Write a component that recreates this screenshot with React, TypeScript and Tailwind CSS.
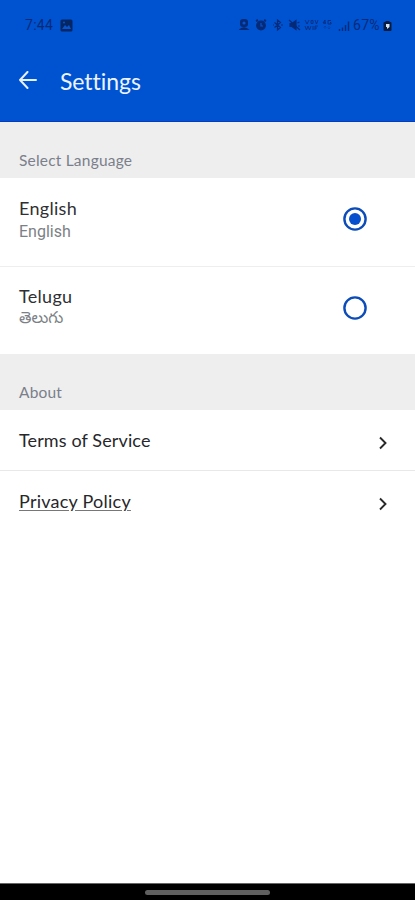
import { useState } from 'react';

type Language = { id: string; name: string; nativeName: string };

const languages: Language[] = [
  { id: 'en', name: 'English', nativeName: 'English' },
  { id: 'te', name: 'Telugu', nativeName: 'తెలుగు' },
];

function StatusBar() {
  return (
    <div className="flex h-[50px] items-center pl-[25px] pr-[23px] font-['Roboto',sans-serif] text-[14px] text-[#052a78]">
      <span className="w-[29px] whitespace-nowrap leading-4 tracking-[0.3px]">7:44</span>
      <svg className="ml-[6px]" width="13" height="13" viewBox="0 0 13 13">
        <rect x="0.5" y="0.5" width="12" height="12" rx="1.5" fill="#052563" />
        <path d="M2 10l3-4 2 2 2-2 2 4z" fill="#0754cd" />
        <circle cx="4" cy="3.5" r="1" fill="#0754cd" />
      </svg>
      <div className="ml-auto flex items-center">
        <svg width="98" height="14" viewBox="0 0 98 14" fill="none" stroke="#052a78" strokeWidth="1.2">
          {/* contact */}
          <rect x="1" y="1" width="8" height="8" rx="3" fill="#052a78" stroke="none" />
          <circle cx="5" cy="5" r="1.6" fill="#0754cd" stroke="none" />
          <path d="M1 11.500q4-3.500 8 0z" fill="#052a78" />
          {/* alarm */}
          <circle cx="22" cy="7.5" r="4.3" fill="#052a78" />
          <path d="M17 3l2-1M27 3l-2-1" strokeWidth="2" />
          <path d="M22 5v3h2" stroke="#0754cd" />
          {/* bluetooth */}
          <path d="M35.5 4.5l6 5-3 2.5V2l3 2.5-6 5M34 7h1M42 7h2" />
          {/* muted speaker */}
          <path d="M51 5.5h2l4-3v9l-4-3h-2z" fill="#052a78" />
          <path d="M50 2l11 10M58.5 5l2-1M59 8h2" />
          {/* vo wifi */}
          <path d="M66 2l2 4 2-4M72 2.5h2v3h-2zM76 2l1.5 4L79 2M66 8l1.5 4 1.5-4 1.5 4L72 8M74 8v4M76 12V8h3M76 10h2" strokeWidth="0.8" />
          {/* network type */}
          <path d="M86 6V2l-2 3h3M92 2.5h-3V6h3V4.5h-1" strokeWidth="0.9" />
          <path d="M86 8v3M84.5 9.5L86 8l1.5 1.5M90 8v3M88.5 9.5L90 11l1.5-1.5" strokeWidth="0.6" opacity="0.6" />
        </svg>
        <svg className="ml-px" width="13" height="13" viewBox="0 0 13 13" stroke="#052a78">
          <path d="M1.5 12v-2M4.5 12V8.500M7.500 12V6M10.500 12V2.500" strokeWidth="1.4" />
        </svg>
        <span className="ml-[2px] w-[30px] whitespace-nowrap leading-4 tracking-[0.3px]">67%</span>
        <svg className="mt-[2px]" width="9" height="12" viewBox="0 0 9 12">
          <path d="M2.500 2V1h4v1h1q1 0 1 1v7q0 1-1 1h-6q-1 0-1-1V3q0-1 1-1z" fill="#071c43" />
          <path d="M3 4h3.500v3L4 9V7H3z" fill="#d5e5ed" />
        </svg>
      </div>
    </div>
  );
}

function SectionTitle({ title }: { title: string }) {
  return (
    <div className="flex h-14 items-end bg-[#eeeeee] px-[19px] pb-[8px]">
      <h2 className="text-[15.500px] leading-5 tracking-[0.200px] text-[#7b7f8b]">{title}</h2>
    </div>
  );
}

function Radio({ checked }: { checked: boolean }) {
  return (
    <svg width="24" height="24" viewBox="0 0 24 24" fill="none">
      <circle cx="12" cy="12" r="10.6" stroke="#0c4cb9" strokeWidth="2.4" />
      {checked && <circle cx="12" cy="12" r="6" fill="#0750cd" />}
    </svg>
  );
}

function LinkRow({ label, underline }: { label: string; underline?: boolean }) {
  return (
    <button className="flex h-[60px] w-full items-center justify-between pl-[19px] pr-[27px] text-left">
      <span className={`text-[18px] leading-6 text-[#27272a] ${underline ? 'tracking-[0.240px] underline decoration-[#777] underline-offset-2' : 'tracking-[0.120px]'}`}>
        {label}
      </span>
      <svg className="mt-[5px]" width="10" height="14" viewBox="0 0 10 14" fill="none" stroke="#292929" strokeWidth="1.9">
        <path d="M2 1.500L7.500 7L2 12.500" />
      </svg>
    </button>
  );
}

export default function SettingsScreen() {
  const [selected, setSelected] = useState('en');

  return (
    <div className="flex h-[900px] w-[415px] flex-col overflow-hidden bg-white font-['Lato',sans-serif]">
      <header className="h-[122px] border-b border-[#073bbd] bg-[#0053d0]">
        <StatusBar />
        <div className="flex h-[62px] items-center pl-[18px]">
          <button aria-label="Back">
            <svg width="20" height="20" viewBox="0 0 20 20" fill="none" stroke="#e6f0ff" strokeWidth="2" strokeLinecap="round" strokeLinejoin="round">
              <path d="M18 9H2M9.500 1L2 9l7.500 8" />
            </svg>
          </button>
          <h1 className="ml-[22px] text-[23px] leading-7 tracking-[-0.050px] text-[#edf4ff]">Settings</h1>
        </div>
      </header>

      <SectionTitle title="Select Language" />
      {languages.map((lang, i) => (
        <button
          key={lang.id}
          onClick={() => setSelected(lang.id)}
          className={`flex w-full items-start justify-between pl-[19px] pr-12 text-left ${i === 0 ? 'h-[89px] border-b border-[#eeeeee] pt-[18px]' : 'h-[87px] pt-[17px]'}`}
        >
          <span className="flex flex-col">
            <span className="text-[18px] leading-6 tracking-[0.300px] text-[#303034]">{lang.name}</span>
            <span className={`font-['Roboto','Noto_Sans_Telugu','Noto_Sans',sans-serif] text-[16px] text-[#7b7f86] ${i === 0 ? 'leading-6' : 'leading-5'}`}>
              {lang.nativeName}
            </span>
          </span>
          <span className={i === 0 ? 'mt-[11px]' : 'mt-3'}>
            <Radio checked={selected === lang.id} />
          </span>
        </button>
      ))}

      <SectionTitle title="About" />
      <div className="border-b border-[#e8e8e8]">
        <LinkRow label="Terms of Service" />
      </div>
      <LinkRow label="Privacy Policy" underline />

      <footer className="mt-auto flex h-[17px] items-center justify-center border-t border-[#666] bg-black">
        <div className="h-[5px] w-[125px] rounded-full bg-[#606060]" />
      </footer>
    </div>
  );
}
